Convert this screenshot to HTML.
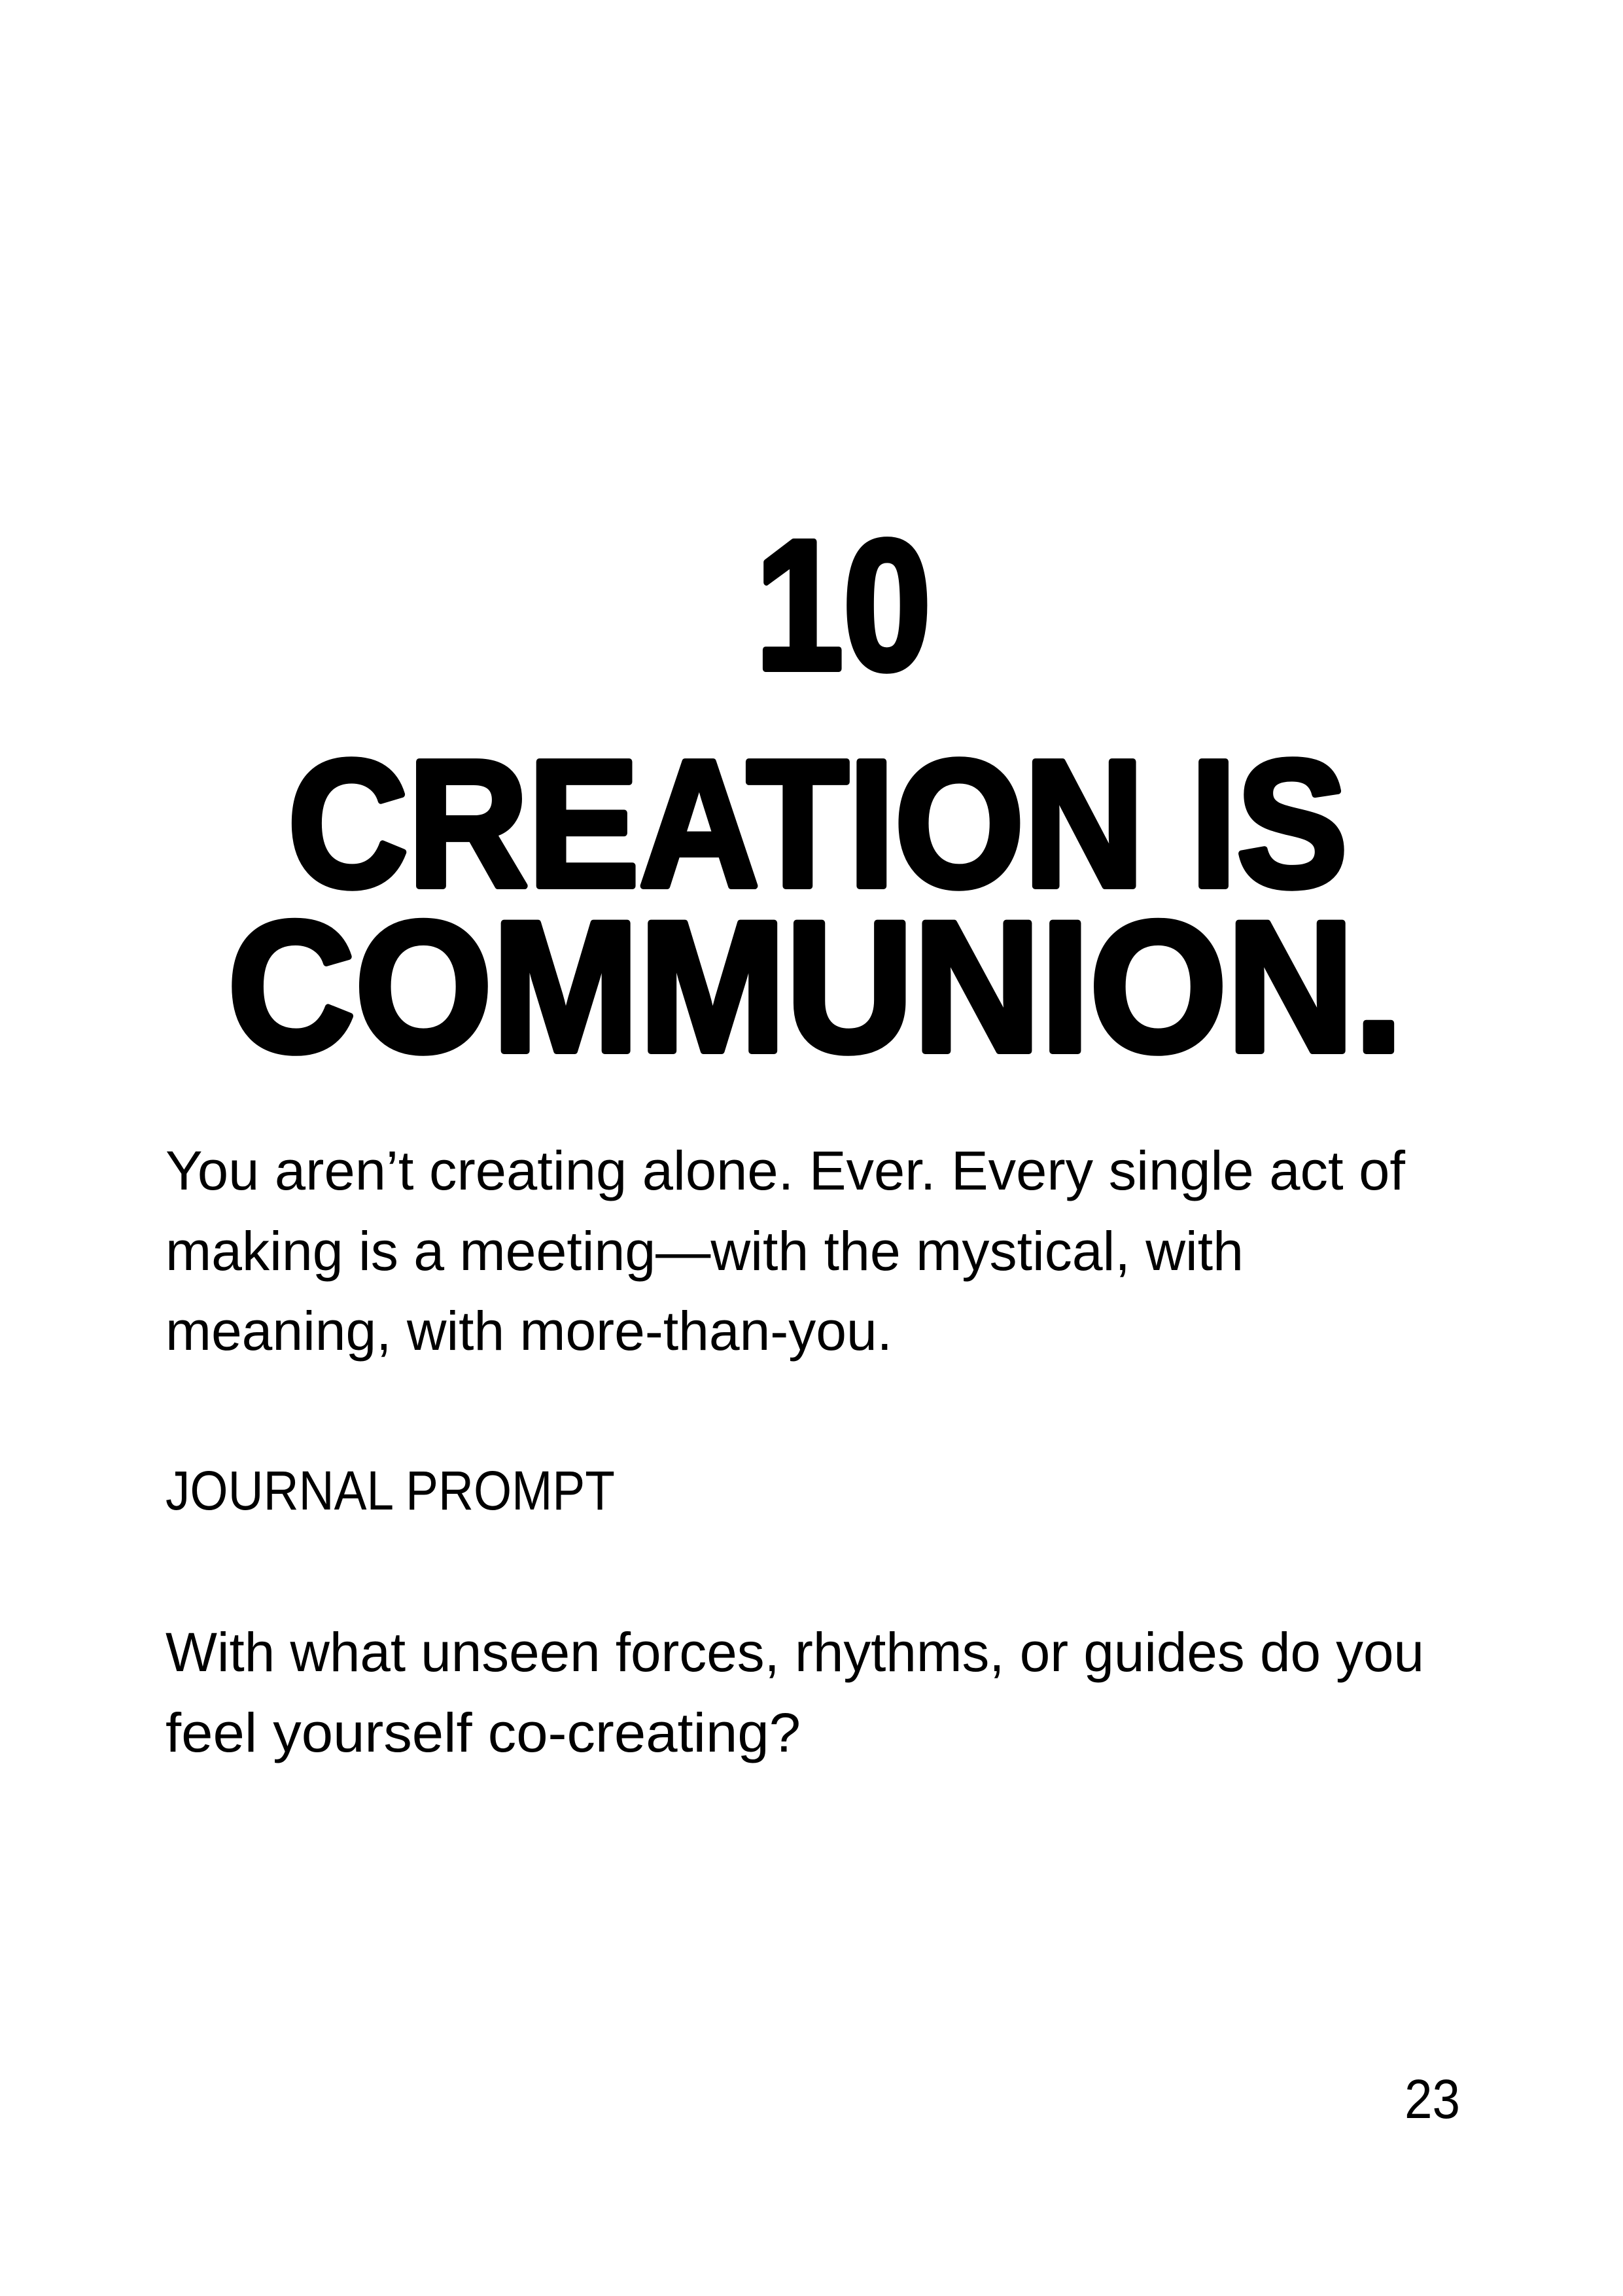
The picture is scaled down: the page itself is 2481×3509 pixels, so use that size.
<!DOCTYPE html>
<html><head><meta charset="utf-8"><style>html,body{margin:0;padding:0;background:#fff}svg{display:block}</style></head>
<body>
<svg width="2481" height="3509" viewBox="0 0 2481 3509" xmlns="http://www.w3.org/2000/svg">
<rect width="2481" height="3509" fill="#fff"/>
<g font-family="'Liberation Sans', sans-serif" font-weight="bold" fill="#000" stroke="#000" stroke-width="10" stroke-linejoin="round">
<text x="1155" y="1022" font-size="282" textLength="268" lengthAdjust="spacingAndGlyphs">10</text>
<text x="440" y="1354" font-size="276" textLength="1620" lengthAdjust="spacingAndGlyphs">CREATION IS</text>
<text x="348" y="1606" font-size="284" textLength="1797" lengthAdjust="spacingAndGlyphs">COMMUNION.</text>
</g>
<g font-family="'Liberation Sans', sans-serif" fill="#000" font-size="84">
<text x="253" y="1818" textLength="1895" lengthAdjust="spacingAndGlyphs">You aren’t creating alone. Ever. Every single act of</text>
<text x="253" y="1941" textLength="1648" lengthAdjust="spacingAndGlyphs">making is a meeting—with the mystical, with</text>
<text x="253" y="2063" textLength="1111" lengthAdjust="spacingAndGlyphs">meaning, with more-than-you.</text>
<text x="253" y="2307" textLength="687" lengthAdjust="spacingAndGlyphs">JOURNAL PROMPT</text>
<text x="253" y="2554" textLength="1924" lengthAdjust="spacingAndGlyphs">With what unseen forces, rhythms, or guides do you</text>
<text x="253" y="2677" textLength="971" lengthAdjust="spacingAndGlyphs">feel yourself co-creating?</text>
<text x="2147" y="3237" textLength="85" lengthAdjust="spacingAndGlyphs">23</text>
</g>
</svg>
</body></html>
